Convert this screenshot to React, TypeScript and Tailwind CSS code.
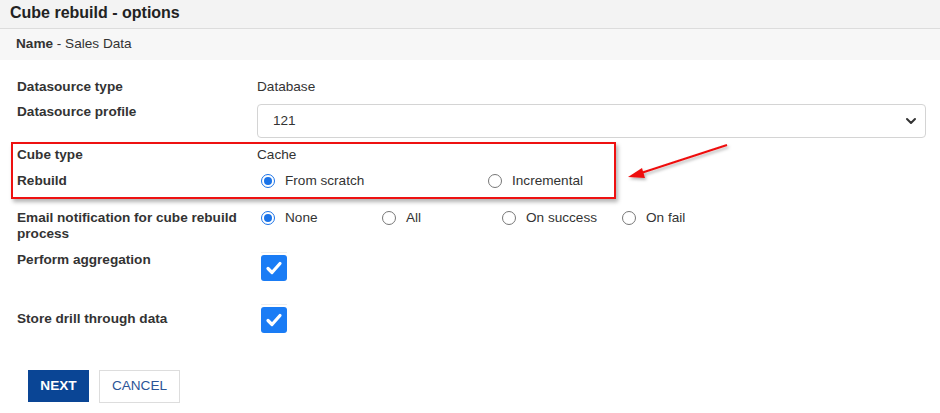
import { ReactNode } from 'react'

const font = { fontFamily: '"Liberation Sans", Arial, sans-serif' }

function Radio({ checked, label, width }: { checked?: boolean; label: string; width: string }) {
  return (
    <div className={`flex items-center ${width}`}>
      <span
        className={`flex h-[14px] w-[14px] items-center justify-center rounded-full border ${
          checked ? 'border-[#1a73e8] border-[1.5px]' : 'border-[#777]'
        } bg-white`}
      >
        {checked && <span className="h-[8px] w-[8px] rounded-full bg-[#1a73e8]" />}
      </span>
      <span className="ml-[10px] text-[13.6px] leading-[16px] text-[#333]">{label}</span>
    </div>
  )
}

function Checkbox() {
  return (
    <div className="flex flex-col">
      <div className="h-px w-[26px] bg-[#eee]" />
      <div className="mt-[2px] flex h-[26px] w-[26px] items-center justify-center rounded-[3px] bg-[#1a7cf5]">
        <svg width="20" height="20" viewBox="0 0 20 20" fill="none">
          <path d="M4 10.5l4 4 8-9" stroke="white" strokeWidth="3.2" strokeLinecap="round" strokeLinejoin="round" />
        </svg>
      </div>
    </div>
  )
}

function Row({ label, children, className = '' }: { label: ReactNode; children: ReactNode; className?: string }) {
  return (
    <div className={`flex items-start ${className}`}>
      <div className="w-[240px] shrink-0 pr-[4px] text-[13.6px] font-bold leading-[16px] text-[#333]">{label}</div>
      <div className="flex-1 text-[13.6px] leading-[16px] text-[#333]">{children}</div>
    </div>
  )
}

export default function App() {
  return (
    <div className="relative h-[413px] w-[940px] overflow-hidden bg-white" style={font}>
      {/* Header */}
      <div className="flex h-[29px] items-center border-b border-[#dcdcdc] bg-[#f3f3f3] pl-[10px] pb-[3px]">
        <span className="text-[16px] font-bold text-[#222]">Cube rebuild - options</span>
      </div>
      <div className="flex h-[31px] items-center bg-[#f7f7f7] pl-[16px]">
        <span className="text-[13.6px] text-[#333]">
          <b>Name</b> - Sales Data
        </span>
      </div>

      {/* Form */}
      <div className="pl-[17px] pr-[14px] pt-[19px]">
        <Row label="Datasource type">Database</Row>

        <Row label="Datasource profile" className="mt-[9px]">
          <div className="flex h-[34px] items-center justify-between rounded-[4px] border border-[#d4d4d4] bg-white pl-[15px] pr-[8px]">
            <span>121</span>
            <svg width="12" height="12" viewBox="0 0 12 12" fill="none">
              <path d="M2 4l4 4 4-4" stroke="#333" strokeWidth="2" strokeLinecap="round" strokeLinejoin="round" />
            </svg>
          </div>
        </Row>

        <Row label="Cube type" className="mt-[9px]">
          Cache
        </Row>

        <Row label="Rebuild" className="mt-[10px]">
          <div className="flex h-[16px] items-center pl-[4px]">
            <Radio checked label="From scratch" width="w-[227px]" />
            <Radio label="Incremental" width="w-[120px]" />
          </div>
        </Row>

        <Row
          label={
            <>
              Email notification for cube rebuild
              <br />
              process
            </>
          }
          className="mt-[21px]"
        >
          <div className="flex h-[16px] items-center pl-[4px]">
            <Radio checked label="None" width="w-[121px]" />
            <Radio label="All" width="w-[120px]" />
            <Radio label="On success" width="w-[120px]" />
            <Radio label="On fail" width="w-[100px]" />
          </div>
        </Row>

        <Row label="Perform aggregation" className="mt-[10px]">
          <div className="pl-[4px]">
            <Checkbox />
          </div>
        </Row>

        <Row label={<span className="block pt-[7px]">Store drill through data</span>} className="mt-[23px]">
          <div className="pl-[4px]">
            <Checkbox />
          </div>
        </Row>

        <div className="mt-[37px] flex gap-[10px] pl-[11px]">
          <button className="h-[32px] w-[61px] bg-[#0a4595] text-[13.6px] font-bold text-white">NEXT</button>
          <button className="h-[33px] w-[81px] border border-[#ddd] bg-white text-[13.6px] text-[#2b5597]">CANCEL</button>
        </div>
      </div>

      {/* Annotation */}
      <div className="absolute left-[11px] top-[142px] h-[57px] w-[605px] border-2 border-[#ee1111] shadow-[2px_3px_4px_rgba(0,0,0,0.3)]" />
      <svg className="absolute left-[620px] top-[138px]" width="120" height="50" viewBox="0 0 120 50">
        <defs>
          <filter id="sh" x="-20%" y="-50%" width="140%" height="200%">
            <feDropShadow dx="1.5" dy="2" stdDeviation="1.5" floodColor="#000" floodOpacity="0.3" />
          </filter>
        </defs>
        <g filter="url(#sh)">
          <line x1="107" y1="7" x2="18" y2="36" stroke="#ee1111" strokeWidth="2" />
          <path d="M8 39 L22 30 L25 40 Z" fill="#ee1111" />
        </g>
      </svg>
    </div>
  )
}
